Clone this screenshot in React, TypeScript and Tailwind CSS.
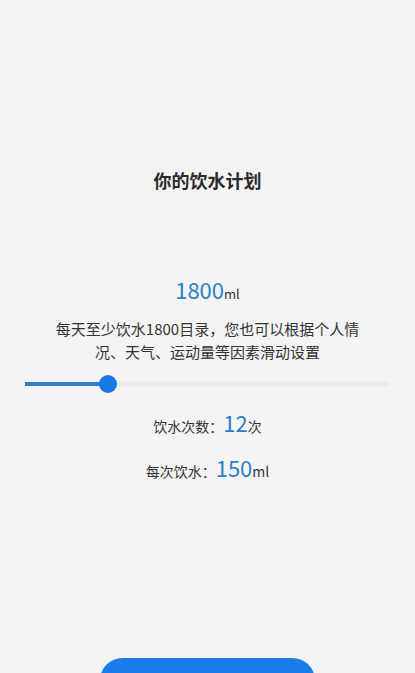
const FONT = { fontFamily: '"Noto Sans CJK SC", "Noto Sans", sans-serif' }

export default function App() {
  const percent = 22.7 // 1800ml on the slider range

  return (
    <div style={FONT} className="flex h-[673px] w-full flex-col items-center overflow-hidden bg-[#f4f4f4] text-[#333]">
      {/* Heading */}
      <h1 className="mt-[167px] text-[18px] font-bold leading-[26px] text-[#2b2b2b]">你的饮水计划</h1>

      {/* Daily target */}
      <p className="mt-[81px] flex items-baseline leading-[30px] text-[#2b80c6]">
        <span className="text-[22px]">1800</span>
        <span className="text-[13px] text-[#333]">ml</span>
      </p>
      <p className="mt-[8px] w-[322px] text-center text-[15px] leading-[23px] text-[#333]">
        每天至少饮水1800目录，您也可以根据个人情况、天气、运动量等因素滑动设置
      </p>

      {/* Slider */}
      <div className="mt-[12px] w-full px-[25px]">
        <div className="relative h-[18px]">
          <div className="absolute left-0 right-0 top-[7px] h-[4px] rounded-full bg-[#ececec]" />
          <div className="absolute left-0 top-[7px] h-[4px] bg-[#2d7fd0]" style={{ width: `${percent}%` }} />
          <div
            className="absolute top-0 h-[18px] w-[18px] -translate-x-1/2 rounded-full bg-[#1a78e6]"
            style={{ left: `${percent}%` }}
          />
        </div>
      </div>

      {/* Breakdown */}
      <p className="mt-[14px] flex items-baseline text-[14px] leading-[30px]">
        <span>饮水次数：</span>
        <span className="text-[22px] text-[#2b80c6]">12</span>
        <span>次</span>
      </p>
      <p className="mt-[11px] flex items-baseline text-[14px] leading-[30px]">
        <span>每次饮水：</span>
        <span className="text-[22px] text-[#2b80c6]">150</span>
        <span>ml</span>
      </p>

      <button className="mt-auto mb-[-30px] h-[45px] w-[215px] rounded-full bg-[#1a7ce8] pt-[4px] text-[16px] text-white">
        开始饮水计划
      </button>
    </div>
  )
}
